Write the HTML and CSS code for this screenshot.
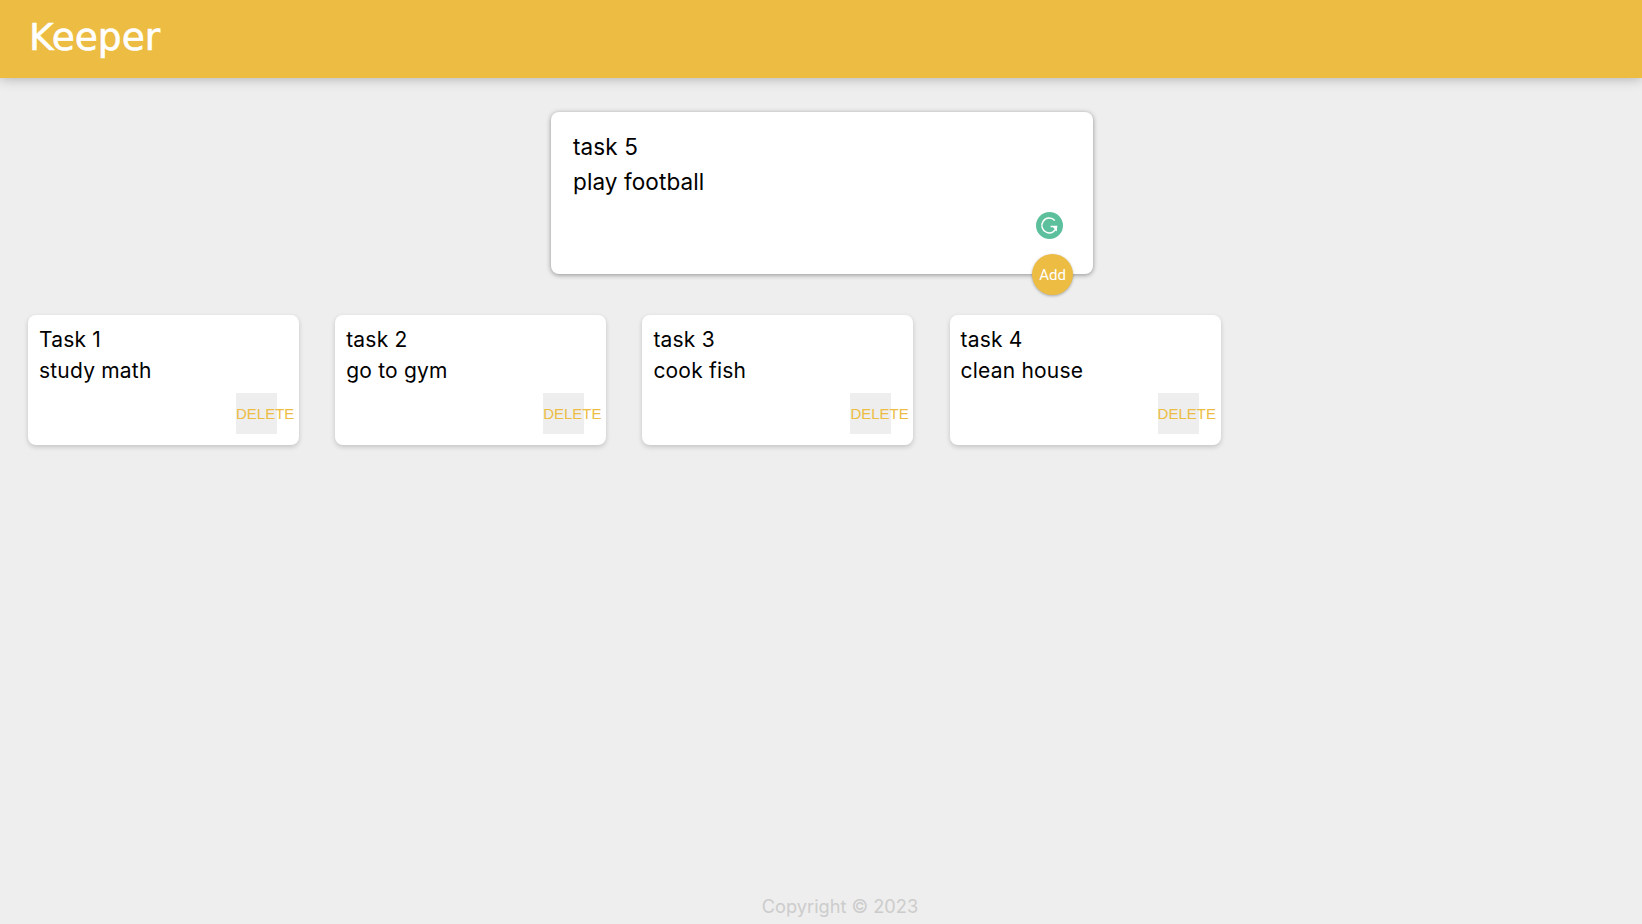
FILE: index.html
```html
<!DOCTYPE html>
<html lang="en">
<head>
<meta charset="utf-8">
<title>Keeper</title>
<link rel="stylesheet" href="styles.css">
</head>
<body>
<header class="header"><h1 class="logo">Keeper</h1></header>
<main class="content">
  <div class="form-row">
    <form class="note-form">
      <div class="form-title">task 5</div>
      <div class="form-body">play football</div>
      <span class="grammarly">
        <svg viewBox="0 0 27 27" width="27" height="27" aria-hidden="true">
          <circle cx="13.5" cy="13.5" r="13.5" fill="#5dc09d"/>
          <path d="M18.8 8.6A7.4 7.4 0 1 0 20.6 14.4H14.6" fill="none" stroke="#fff" stroke-width="1.5"/>
          <path d="M21 14.2V19.4L16.4 14.6Z" fill="#fff"/>
        </svg>
      </span>
      <button class="add-btn" type="button">Add</button>
    </form>
  </div>
  <div class="notes">
    <article class="note"><h2 class="note-title">Task 1</h2><p class="note-text">study math</p><div class="note-actions"><button class="del-btn" type="button">DELETE</button></div></article>
    <article class="note"><h2 class="note-title">task 2</h2><p class="note-text">go to gym</p><div class="note-actions"><button class="del-btn" type="button">DELETE</button></div></article>
    <article class="note"><h2 class="note-title">task 3</h2><p class="note-text">cook fish</p><div class="note-actions"><button class="del-btn" type="button">DELETE</button></div></article>
    <article class="note"><h2 class="note-title">task 4</h2><p class="note-text">clean house</p><div class="note-actions"><button class="del-btn" type="button">DELETE</button></div></article>
  </div>
</main>
<footer class="footer">Copyright © 2023</footer>
</body>
</html>
```
FILE: styles.css
```css
* { box-sizing: border-box; }
html, body { margin: 0; height: 100%; }
body {
  display: flex;
  flex-direction: column;
  height: 100vh;
  overflow: hidden;
  background: #eeeeee;
  font-family: "Inter", "Noto Sans", sans-serif;
  color: #000;
}
.header {
  height: 78px;
  flex: none;
  padding: 15px 29px 0;
  background: #ecbc43;
  box-shadow: 0 0 12px rgba(0, 0, 0, 0.3);
}
.logo {
  margin: 0;
  font-family: "DejaVu Sans", sans-serif;
  font-size: 37.5px;
  font-weight: 400;
  line-height: 44px;
  color: #fff;
  -webkit-text-stroke: 0.6px #fff;
}
.content { flex: 1; display: flex; flex-direction: column; }
.form-row { display: flex; justify-content: center; padding: 34px 0 0 2px; }
.note-form {
  position: relative;
  width: 542px;
  height: 162px;
  padding: 17px 22px 0;
  background: #fff;
  border-radius: 8px;
  box-shadow: 0 1px 5px rgba(0, 0, 0, 0.4);
  font-size: 22.5px;
  letter-spacing: 0.1px;
}
.form-title, .form-body { height: 35px; line-height: 36px; }
.grammarly { position: absolute; right: 30px; top: 100px; width: 27px; height: 27px; }
.add-btn {
  position: absolute;
  right: 20px;
  bottom: -21px;
  width: 41px;
  height: 41px;
  padding: 0;
  border: none;
  border-radius: 50%;
  background: #ecbc43;
  color: #fff;
  font-family: "Roboto", sans-serif;
  font-size: 15px;
  font-weight: 400;
  box-shadow: 0 1px 3px rgba(0, 0, 0, 0.3);
}
.notes { display: flex; gap: 36.2px; padding: 41px 0 0 28px; }
.note {
  width: 271px;
  height: 130px;
  padding: 9px 11px 0;
  background: #fff;
  border-radius: 8px;
  box-shadow: 0 2px 5px rgba(0, 0, 0, 0.18);
}
.note-title, .note-text {
  margin: 0;
  height: 31px;
  font-size: 21px;
  font-weight: 400;
  line-height: 31px;
  letter-spacing: 0.2px;
}
.note-actions { display: flex; justify-content: flex-end; padding: 7px 12px 0 0; margin-right: -1px; }
.del-btn {
  width: 41px;
  height: 41px;
  padding: 0;
  border: none;
  background: #eeeeee;
  color: #ecbc43;
  font-family: "Liberation Sans", sans-serif;
  font-size: 15px;
  white-space: nowrap;
  text-align: left;
  overflow: visible;
}
.footer {
  flex: none;
  height: 37px;
  padding: 1px 0 0 38px;
  text-align: center;
  font-size: 18.2px;
  line-height: 37px;
  color: #cccccc;
}
```
